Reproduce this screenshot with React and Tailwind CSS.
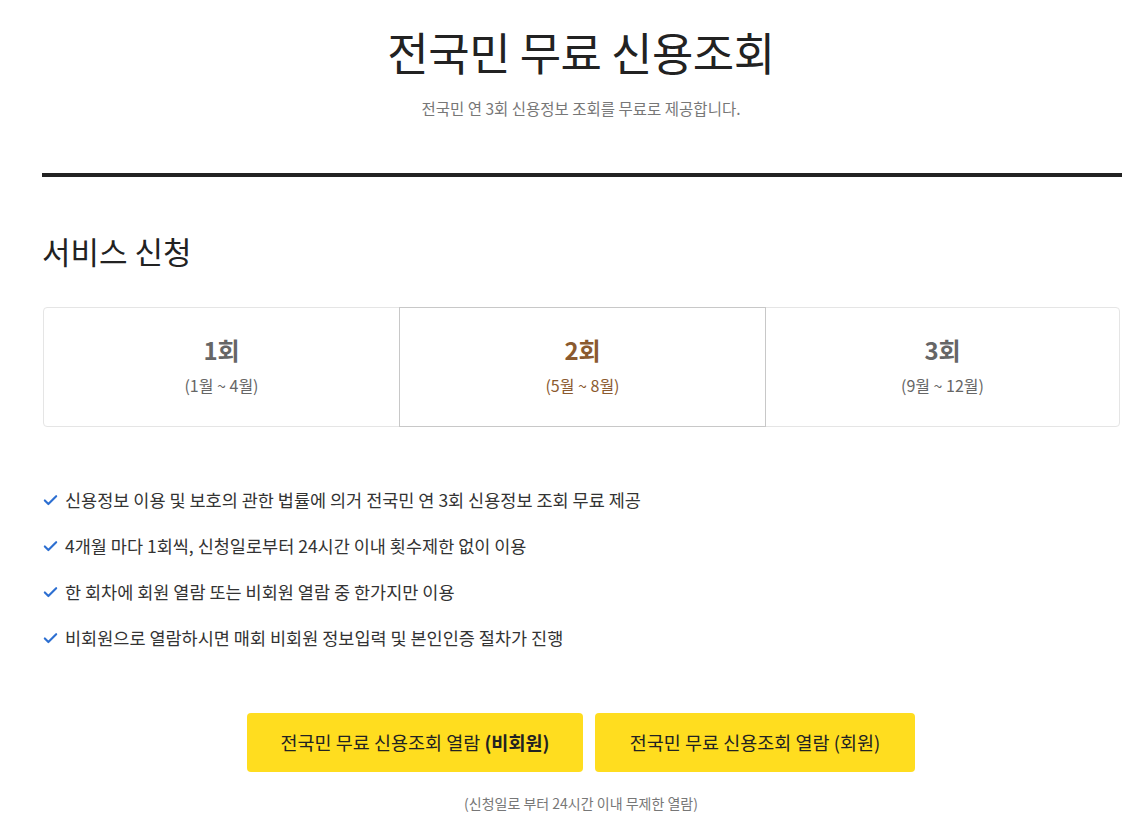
import { Check } from 'lucide-react'

const rounds = [
  { title: '1회', period: '(1월 ~ 4월)', active: false },
  { title: '2회', period: '(5월 ~ 8월)', active: true },
  { title: '3회', period: '(9월 ~ 12월)', active: false },
]

const notices = [
  '신용정보 이용 및 보호의 관한 법률에 의거 전국민 연 3회 신용정보 조회 무료 제공',
  '4개월 마다 1회씩, 신청일로부터 24시간 이내 횟수제한 없이 이용',
  '한 회차에 회원 열람 또는 비회원 열람 중 한가지만 이용',
  '비회원으로 열람하시면 매회 비회원 정보입력 및 본인인증 절차가 진행',
]

const App = () => {
  return (
    <div className="w-[1145px] bg-white text-[#222] font-['Noto_Sans_CJK_KR','Noto_Sans',sans-serif]">
      {/* 상단 타이틀 */}
      <div className="pt-[22px] pl-[17px] text-center">
        <h1 className="text-[45px] leading-[60px] font-normal tracking-[-0.5px] text-[#222]">전국민 무료 신용조회</h1>
        <p className="mt-[16px] text-[15.5px] leading-[20px] text-[#777]">전국민 연 3회 신용정보 조회를 무료로 제공합니다.</p>
      </div>

      <div className="mx-[42px] mt-[55px] h-[4px] bg-[#222] w-[1080px]" />

      <div className="px-[42px]">
        <h2 className="mt-[51px] text-[31px] leading-[46px] text-[#222]">서비스 신청</h2>

        {/* 회차 선택 */}
        <div className="mt-[33px] ml-px flex h-[120px] w-[1077px] rounded-[4px] border border-[#e5e5e5]">
          {rounds.map((r, i) => (
            <div
              key={r.title}
              className={
                r.active
                  ? 'flex w-[367px] flex-col items-center justify-center pb-[4px] border border-[#c8c8c8] -my-px'
                  : i === 0
                    ? 'flex w-[355px] flex-col items-center justify-center pb-[4px]'
                    : 'flex flex-1 flex-col items-center justify-center pb-[4px]'
              }
            >
              <div className={r.active ? 'text-[24px] leading-[32px] font-semibold text-[#8b5a2f]' : 'text-[24px] leading-[32px] font-semibold text-[#666]'}>
                {r.title}
              </div>
              <div className={r.active ? 'mt-[8px] text-[16px] leading-[22px] text-[#8b5a2f]' : 'mt-[8px] text-[16px] leading-[22px] text-[#666]'}>
                {r.period}
              </div>
            </div>
          ))}
        </div>

        {/* 안내사항 */}
        <ul className="mt-[61px] space-y-[22px]">
          {notices.map((n) => (
            <li key={n} className="flex items-center gap-[6px] text-[17.5px] leading-[24px] text-[#333]">
              <Check size={17} strokeWidth={3} className="text-[#2d6fd1]" />
              <span>{n}</span>
            </li>
          ))}
        </ul>

        {/* 버튼 */}
        <div className="mt-[63px] flex justify-center gap-[12px] pl-[17px]">
          <button className="h-[59px] w-[336px] rounded-[4px] bg-[#ffdd1f] text-[18.5px] text-[#222]">
            전국민 무료 신용조회 열람 <b className="font-bold">(비회원)</b>
          </button>
          <button className="h-[59px] w-[320px] rounded-[4px] bg-[#ffdd1f] text-[18.5px] text-[#222]">
            전국민 무료 신용조회 열람 (회원)
          </button>
        </div>
        <p className="mt-[21px] pl-[17px] text-center text-[14px] leading-[20px] text-[#777]">(신청일로 부터 24시간 이내 무제한 열람)</p>
      </div>
    </div>
  )
}

export default App
